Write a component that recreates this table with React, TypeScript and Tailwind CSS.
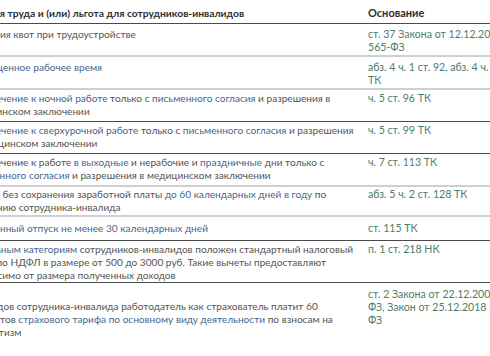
import React from "react";

type Seg = [string, boolean?];
type Row = {
  left: Seg[][];
  right: string[];
  border: "light" | "dark";
  pad: string;
  leftPad?: string;
};

const rows: Row[] = [
  {
    left: [[["Введения квот при трудоустройстве"]]],
    right: ["ст. 37 Закона от 12.12.2023 N", "565-ФЗ"],
    border: "light",
    pad: "pt-[4px] pb-[1px]",
  },
  {
    left: [[["Сокращенное рабочее время", true]]],
    right: ["абз. 4 ч. 1 ст. 92, абз. 4 ч. 1 ст. 94", "ТК"],
    border: "light",
    pad: "pt-[4px] pb-[1px]",
  },
  {
    left: [
      [
        ["Привлечение к ночной работе", true],
        [" только с "],
        ["письменного согласия", true],
        [" и разрешения в"],
      ],
      [["медицинском заключении"]],
    ],
    right: ["ч. 5 ст. 96 ТК"],
    border: "dark",
    pad: "pt-[2px] pb-[3px]",
  },
  {
    left: [
      [
        ["Привлечение к сверхурочной работе", true],
        [" только с "],
        ["письменного согласия", true],
        [" и разрешения"],
      ],
      [["в медицинском заключении"]],
    ],
    right: ["ч. 5 ст. 99 ТК"],
    border: "dark",
    pad: "pt-[2px] pb-[3px]",
  },
  {
    left: [
      [
        ["Привлечение к работе "],
        ["в выходные", true],
        [" и нерабочие и "],
        ["праздничные", true],
        [" дни только с"],
      ],
      [["письменного согласия", true], [" и разрешения в медицинском заключении"]],
    ],
    right: ["ч. 7 ст. 113 ТК"],
    border: "light",
    pad: "pt-[2px] pb-[3px]",
  },
  {
    left: [
      [
        ["Отпуск без сохранения заработной платы "],
        ["до 60 календарных дней в году", true],
        [" по"],
      ],
      [["заявлению сотрудника-инвалида"]],
    ],
    right: ["абз. 5 ч. 2 ст. 128 ТК"],
    border: "light",
    pad: "pt-[1px] pb-[1px]",
  },
  {
    left: [[["Удлиненный отпуск не менее 30 календарных дней", true]]],
    right: ["ст. 115 ТК"],
    border: "dark",
    pad: "pt-[5px] pb-[5px]",
  },
  {
    left: [
      [
        ["Отдельным категориям", true],
        [" сотрудников-инвалидов положен стандартный налоговый"],
      ],
      [["вычет по НДФЛ в размере от 500 до 3000 руб. Такие вычеты предоставляют"]],
      [["независимо от размера полученных доходов"]],
    ],
    right: ["п. 1 ст. 218 НК"],
    border: "dark",
    pad: "pt-[2px] pb-[0px]",
  },
  {
    left: [
      [["С доходов сотрудника-инвалида работодатель как страхователь платит 60"]],
      [
        ["процентов "],
        ["страхового тарифа по основному виду деятельности", true],
        [" по взносам на"],
      ],
      [["травматизм"]],
    ],
    right: ["ст. 2 Закона от 22.12.2005 N 179-", "ФЗ, Закон от 25.12.2018 N 494-", "ФЗ"],
    border: "light",
    pad: "pt-[5px] pb-[20px]",
    leftPad: "pt-[12px]",
  },
];

export default function App() {
  return (
    <div
      className="w-[490px] h-[356px] overflow-hidden bg-white"
      style={{ fontFamily: 'Lato, "Liberation Sans", sans-serif' }}
    >
      <div className="ml-[-34px] w-[640px] text-[11px] leading-[13px]">
        <div className="flex items-baseline border-b border-[#4a4a4a] pt-[6px] pb-[3px] font-bold text-[#2e2e2e]">
          <div className="w-[402px] shrink-0 whitespace-nowrap text-[10.3px]">
            Условия труда и (или) льгота для сотрудников-инвалидов
          </div>
          <div className="whitespace-nowrap">Основание</div>
        </div>
        {rows.map((r, i) => (
          <div
            key={i}
            className={
              "flex " +
              r.pad +
              " " +
              (r.border === "light"
                ? "border-b-2 border-[#cfcfcf]"
                : "border-b border-[#4a4a4a]")
            }
          >
            <div
              className={
                "w-[402px] shrink-0 text-[10.1px] text-[#545454] " + (r.leftPad ?? "")
              }
            >
              {r.left.map((line, li) => (
                <div key={li} className="whitespace-nowrap">
                  {line.map((s, si) => (
                    <span key={si} className={s[1] ? "text-[#3f6791]" : ""}>
                      {s[0]}
                    </span>
                  ))}
                </div>
              ))}
            </div>
            <div className="text-[10.6px] text-[#4e7d69]">
              {r.right.map((t, ti) => (
                <div key={ti} className="whitespace-nowrap">
                  {t}
                </div>
              ))}
            </div>
          </div>
        ))}
      </div>
    </div>
  );
}
